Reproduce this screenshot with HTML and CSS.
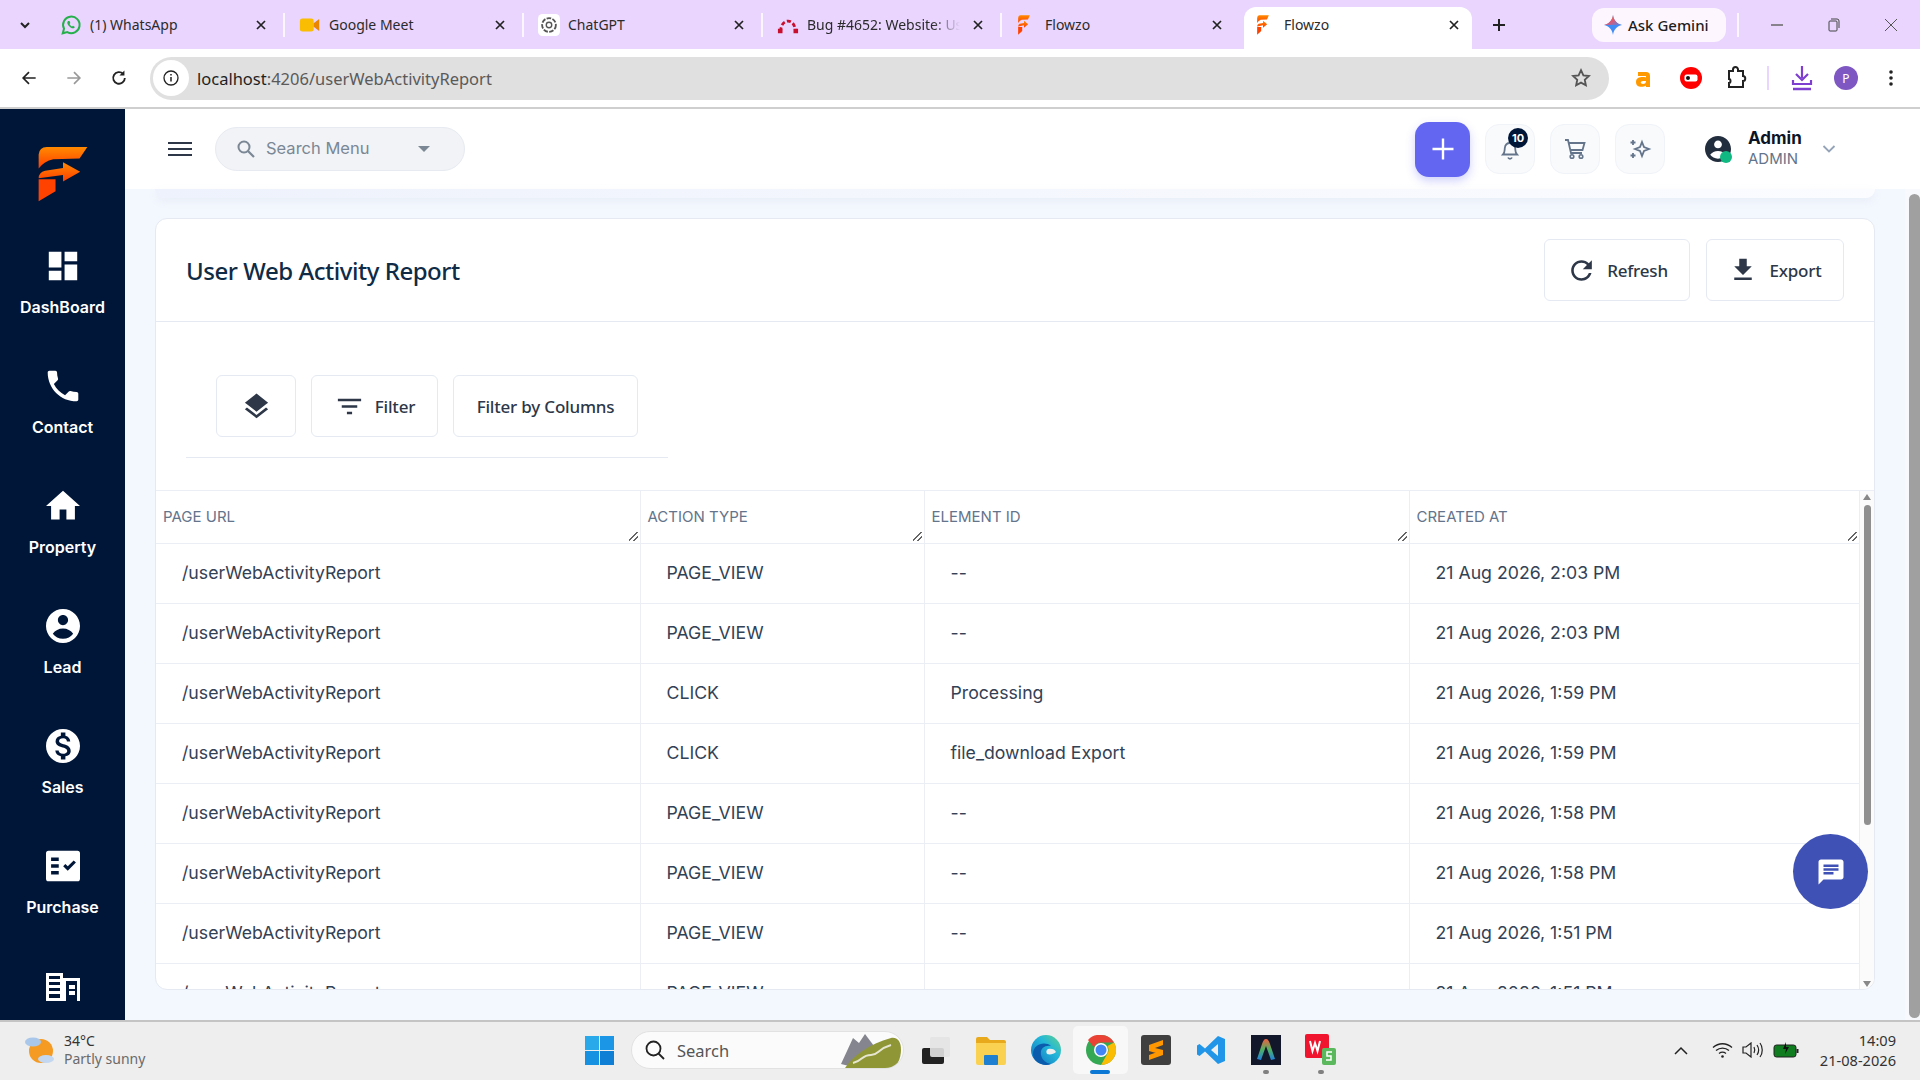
FILE: index.html
```html
<!DOCTYPE html>
<html>
<head>
  <title>Flowzo</title>
  <link rel="stylesheet" href="styles.css">
</head>
<body>
  <svg class="sprite" width="0" height="0">
    <defs>
      <linearGradient id="flameTop" x1="0" y1="0" x2="0" y2="1">
        <stop offset="0" stop-color="#ff8a00"/>
        <stop offset="1" stop-color="#ff3d00"/>
      </linearGradient>
      <symbol id="flowzo" viewBox="118 112 154 170" preserveAspectRatio="none">
        <path fill="url(#flameTop)" d="M120 138q2-23 25-23h125l-24 35-81 2q-28 6-45 28z"/>
        <path fill="url(#flameTop)" d="M120 210q0-18 20-23l55-8v-18l53 29-53 30v-20z"/>
        <path fill="#ff4200" d="M120 213h52v36l-52 31z"/>
      </symbol>
      <symbol id="close-x" viewBox="0 0 12 12">
        <path d="M2 2l8 8M10 2l-8 8" fill="none" stroke="#222" stroke-width="1.7"/>
      </symbol>
    </defs>
  </svg>

  <!-- browser tabs -->
  <div class="tabstrip">
    <div class="tab-menu">
      <svg width="14" height="14" viewBox="0 0 14 14"><path d="M3 5l4 4 4-4" fill="none" stroke="#222" stroke-width="2"/></svg>
    </div>
    <div class="tab">
      <svg class="tab-icon" viewBox="0 0 24 24"><path fill="none" stroke="#25b04c" stroke-width="2.2" d="M3 21l1.4-5A9 9 0 1 1 8 19.7z"/><path fill="#25b04c" d="M9 7.5c-1 .6-1.400 2-.6 3.800 1 2 2.600 3.500 4.600 4.200 1.600.5 2.800-.2 3.200-1.300l-2-1.400-1 .9c-1.200-.5-2.200-1.500-2.800-2.800l.9-1-1-2.400z"/></svg>
      <span class="tab-title">(1) WhatsApp</span>
      <svg class="tab-close"><use href="#close-x"/></svg>
    </div>
    <span class="tab-sep"></span>
    <div class="tab">
      <svg class="tab-icon" viewBox="0 0 24 24"><rect x="1" y="5" width="15" height="14" rx="2.500" fill="#fbbc04"/><path fill="#ea8600" d="M16 10l6-4.500v13L16 14z"/></svg>
      <span class="tab-title">Google Meet</span>
      <svg class="tab-close"><use href="#close-x"/></svg>
    </div>
    <span class="tab-sep"></span>
    <div class="tab">
      <svg class="tab-icon" viewBox="0 0 24 24"><rect width="24" height="24" rx="5" fill="#fff"/><circle cx="12" cy="12" r="7.500" fill="none" stroke="#555" stroke-width="2" stroke-dasharray="5 1.500"/><circle cx="12" cy="12" r="3" fill="none" stroke="#555" stroke-width="1.500"/></svg>
      <span class="tab-title">ChatGPT</span>
      <svg class="tab-close"><use href="#close-x"/></svg>
    </div>
    <span class="tab-sep"></span>
    <div class="tab">
      <svg class="tab-icon" viewBox="0 0 24 24"><path fill="none" stroke="#c8102e" stroke-width="3" stroke-dasharray="4.500 2.500" d="M4 19C4 4 20 4 20 19"/><path fill="#c8102e" d="M1 16h5v5H1zM18 16h5v5h-5z"/></svg>
      <span class="tab-title tab-title-fade">Bug #4652: Website: User Web</span>
      <svg class="tab-close"><use href="#close-x"/></svg>
    </div>
    <span class="tab-sep"></span>
    <div class="tab">
      <svg class="tab-icon tab-icon-flowzo"><use href="#flowzo"/></svg>
      <span class="tab-title">Flowzo</span>
      <svg class="tab-close"><use href="#close-x"/></svg>
    </div>
    <div class="tab tab-active">
      <svg class="tab-icon tab-icon-flowzo"><use href="#flowzo"/></svg>
      <span class="tab-title">Flowzo</span>
      <svg class="tab-close"><use href="#close-x"/></svg>
    </div>
    <div class="tab-new">
      <svg width="16" height="16" viewBox="0 0 16 16"><path d="M8 2v12M2 8h12" stroke="#222" stroke-width="2"/></svg>
    </div>
    <div class="gemini">
      <svg width="20" height="22" viewBox="0 0 20 22"><defs><linearGradient id="gem" x1="0" y1="0" x2="1" y2="1"><stop offset="0" stop-color="#f4a63a"/><stop offset=".5" stop-color="#e8556a"/><stop offset="1" stop-color="#3f8cf5"/></linearGradient></defs><path fill="#3f8cf5" d="M10 1c.8 5.300 3.800 9 9 10-5.200 1-8.200 4.700-9 10-.8-5.300-3.800-9-9-10 5.200-1 8.200-4.700 9-10z"/><path fill="url(#gem)" d="M10 1c.8 5.300 3.800 9 9 10H1c5.200-1 8.200-4.700 9-10z"/></svg>
      <span>Ask Gemini</span>
    </div>
    <span class="tab-sep tab-sep-win"></span>
    <div class="win-controls">
      <svg width="16" height="16" viewBox="0 0 16 16"><path d="M2 8h12" stroke="#666" stroke-width="1.500"/></svg>
      <svg width="16" height="16" viewBox="0 0 16 16"><rect x="3" y="4" width="8" height="10" rx="1" fill="none" stroke="#444"/><path d="M5 2h6a2 2 0 0 1 2 2v7" fill="none" stroke="#444"/></svg>
      <svg width="16" height="16" viewBox="0 0 16 16"><path d="M2 2l12 12M14 2L2 14" stroke="#555"/></svg>
    </div>
  </div>

  <!-- address bar -->
  <div class="toolbar">
    <div class="nav-buttons">
      <svg width="20" height="20" viewBox="0 0 24 24"><path d="M20 12H5M12 5l-7 7 7 7" fill="none" stroke="#222" stroke-width="2"/></svg>
      <svg width="20" height="20" viewBox="0 0 24 24"><path d="M4 12h15M12 5l7 7-7 7" fill="none" stroke="#999" stroke-width="2"/></svg>
      <svg width="20" height="20" viewBox="0 0 24 24"><path d="M19 12a7 7 0 1 1-2-5" fill="none" stroke="#222" stroke-width="2.200"/><path d="M18.500 3v6h-6z" fill="#222"/></svg>
    </div>
    <div class="omnibox">
      <span class="omni-info">
        <svg width="16" height="16" viewBox="0 0 16 16"><circle cx="8" cy="8" r="7" fill="none" stroke="#222" stroke-width="1.300"/><path d="M8 7v4.500M8 4v1.600" stroke="#222" stroke-width="1.500"/></svg>
      </span>
      <span class="omni-url"><b>localhost</b>:4206/userWebActivityReport</span>
      <svg class="omni-star" width="22" height="22" viewBox="0 0 24 24"><path d="M12 3.500l2.600 5.600 6 .7-4.500 4.100 1.200 6L12 17l-5.300 2.900 1.200-6-4.500-4.100 6-.7z" fill="none" stroke="#555" stroke-width="2"/></svg>
    </div>
    <div class="extensions">
      <svg class="ext" width="18" height="22" viewBox="0 0 18 22"><path d="M3 5h8a4 4 0 0 1 4 4v11h-4v-1.500C9 20 1 21.500 1 15c0-5 6-5.500 10-4.500V9H3zm8 9H8c-3 0-3 3 0 3 2 0 3-1 3-3z" fill="#ff9900"/></svg>
      <svg class="ext" width="24" height="24" viewBox="0 0 24 24"><circle cx="12" cy="12" r="11" fill="#f00"/><rect x="5.500" y="8.500" width="13" height="7" rx="2" fill="#fff"/><circle cx="9" cy="12" r="2" fill="#111"/></svg>
      <svg class="ext" width="22" height="24" viewBox="0 0 22 24"><path d="M4 5h4V3.500a2.500 2.500 0 0 1 5 0V5h5v5c3 0 3 5 0 5v6H4v-4c2 0 2-4 0-4z" fill="none" stroke="#222" stroke-width="2"/></svg>
      <span class="ext-sep"></span>
      <svg class="ext" width="24" height="28" viewBox="0 0 24 28"><path d="M12 2v12M6 10l6 6 6-6M3 16v4h18v-4" fill="none" stroke="#7e3fd1" stroke-width="2.200"/><path d="M3 25h18" stroke="#7e3fd1" stroke-width="2.500"/></svg>
      <span class="profile">P</span>
      <svg class="ext" width="6" height="20" viewBox="0 0 6 20"><circle cx="3" cy="4" r="1.800" fill="#222"/><circle cx="3" cy="10" r="1.800" fill="#222"/><circle cx="3" cy="16" r="1.800" fill="#222"/></svg>
    </div>
  </div>

  <div class="app">
    <!-- sidebar -->
    <nav class="sidebar">
      <svg class="logo"><use href="#flowzo"/></svg>
      <a class="nav-item">
        <svg viewBox="2.500 2.500 19 19" width="30" height="30"><path fill="#fff" d="M3 13h8V3H3zm0 8h8v-6H3zm10 0h8V11h-8zm0-18v6h8V3z"/></svg>
        <span>DashBoard</span>
      </a>
      <a class="nav-item">
        <svg viewBox="2 2 20 20" width="34" height="34"><path fill="#fff" d="M6.620 10.790c1.440 2.830 3.760 5.140 6.590 6.590l2.200-2.200c.27-.27.67-.36 1.020-.24 1.120.37 2.330.57 3.570.57.55 0 1 .45 1 1V20c0 .55-.45 1-1 1-9.390 0-17-7.610-17-17 0-.55.45-1 1-1h3.500c.55 0 1 .45 1 1 0 1.250.2 2.450.57 3.570.11.35.03.74-.25 1.020z"/></svg>
        <span>Contact</span>
      </a>
      <a class="nav-item">
        <svg viewBox="2 2 20 20" width="34" height="34"><path fill="#fff" d="M10 20v-6h4v6h5v-8h3L12 3 2 12h3v8z"/></svg>
        <span>Property</span>
      </a>
      <a class="nav-item">
        <svg viewBox="2 2 20 20" width="34" height="34"><path fill="#fff" d="M12 2C6.480 2 2 6.480 2 12s4.480 10 10 10 10-4.480 10-10S17.520 2 12 2zm0 3.500c1.660 0 3 1.340 3 3s-1.340 3-3 3-3-1.340-3-3 1.340-3 3-3zm0 14c-2.500 0-4.700-1.200-6-3 1.300-1.800 3.500-3 6-3s4.700 1.200 6 3c-1.300 1.800-3.500 3-6 3z"/></svg>
        <span>Lead</span>
      </a>
      <a class="nav-item">
        <svg viewBox="2 2 20 20" width="34" height="34"><path fill="#fff" d="M12 2C6.480 2 2 6.480 2 12s4.480 10 10 10 10-4.480 10-10S17.520 2 12 2zm1.410 16.090V20h-2.670v-1.930c-1.710-.36-3.160-1.460-3.270-3.400h1.960c.1 1.050.82 1.870 2.650 1.870 1.960 0 2.400-.98 2.400-1.590 0-.83-.44-1.610-2.670-2.140-2.480-.6-4.180-1.620-4.180-3.670 0-1.720 1.390-2.840 3.110-3.210V4h2.670v1.950c1.860.45 2.790 1.860 2.850 3.390H14.300c-.05-1.110-.64-1.870-2.220-1.870-1.500 0-2.400.68-2.400 1.640 0 .84.65 1.390 2.670 1.910s4.180 1.390 4.180 3.910c-.01 1.830-1.380 2.830-3.120 3.160z"/></svg>
        <span>Sales</span>
      </a>
      <a class="nav-item">
        <svg viewBox="2 3 20 18" width="34" height="30"><path fill="#fff" fill-rule="evenodd" d="M3.500 3h17A1.500 1.500 0 0 1 22 4.500v15a1.500 1.500 0 0 1-1.500 1.500h-17A1.500 1.500 0 0 1 2 19.500v-15A1.500 1.500 0 0 1 3.500 3zM5 7v2h4.500V7zm0 4v2h4.500v-2zm0 4v2h4.500v-2zm9.800-.2L19.600 10l-1.300-1.300-3.500 3.500-1.400-1.400-1.300 1.300z"/></svg>
        <span>Purchase</span>
      </a>
      <a class="nav-item">
        <svg viewBox="0 0 34 30" width="34" height="30"><path fill="#fff" fill-rule="evenodd" d="M0 2h17v5h17v23H0zm3 3v3h11V5zm0 6v3h11v-3zm0 6v3h11v-3zm0 6v4h11v-4zm17-13v20h11V10zm3 4h6v4h-6zm0 6h6v4h-6z"/></svg>
      </a>
    </nav>

    <div class="main">
      <header class="topbar">
        <button class="menu-btn">
          <svg width="24" height="16" viewBox="0 0 24 16"><path d="M0 2h24M0 8h24M0 14h24" stroke="#2d3748" stroke-width="2.200"/></svg>
        </button>
        <div class="search-menu">
          <svg width="20" height="20" viewBox="0 0 20 20"><circle cx="8" cy="8" r="5.500" fill="none" stroke="#7b8794" stroke-width="2"/><path d="M12 12l6 6" stroke="#7b8794" stroke-width="2.200"/></svg>
          <span class="search-text">Search Menu</span>
          <span class="caret"></span>
        </div>
        <div class="topbar-right">
          <button class="add-btn">
            <svg width="24" height="24" viewBox="0 0 24 24"><path d="M12 1.500v21M1.500 12h21" stroke="#fff" stroke-width="2.400"/></svg>
          </button>
          <button class="icon-btn">
            <svg width="24" height="24" viewBox="0 0 24 24"><path d="M5 17.500c2-2 1.500-4 1.800-6.500C7.200 8 9 6 12 6s4.800 2 5.200 5c.3 2.500-.2 4.500 1.800 6.500zM10 20.500a2.200 2.200 0 0 0 4 0" fill="none" stroke="#64748b" stroke-width="1.800"/></svg>
            <span class="badge">10</span>
          </button>
          <button class="icon-btn">
            <svg width="24" height="24" viewBox="0 0 24 24"><path d="M2 3h3l3 13h11M6 6h15.500l-2 7H7.500" fill="none" stroke="#64748b" stroke-width="1.800"/><circle cx="9" cy="19.500" r="1.800" fill="none" stroke="#64748b" stroke-width="1.600"/><circle cx="18" cy="19.500" r="1.800" fill="none" stroke="#64748b" stroke-width="1.600"/></svg>
          </button>
          <button class="icon-btn">
            <svg width="24" height="24" viewBox="0 0 24 24"><path d="M14 5l2 5 5 2-5 2-2 5-2-5-5-2 5-2z" fill="none" stroke="#64748b" stroke-width="1.800"/><path d="M5 3v5M2.500 5.500h5M5 16v5M2.500 18.500h5" stroke="#64748b" stroke-width="1.800"/></svg>
          </button>
          <div class="user">
            <span class="user-pic">
              <svg width="26" height="26" viewBox="2 2 20 20"><path fill="#222d3d" d="M12 2C6.480 2 2 6.480 2 12s4.480 10 10 10 10-4.480 10-10S17.520 2 12 2zm0 3.500c1.660 0 3 1.340 3 3s-1.340 3-3 3-3-1.340-3-3 1.340-3 3-3zm0 14c-2.500 0-4.700-1.200-6-3 1.300-1.800 3.500-3 6-3s4.700 1.200 6 3c-1.300 1.800-3.500 3-6 3z"/></svg>
              <span class="online"></span>
            </span>
            <div class="user-text">
              <strong>Admin</strong>
              <small>ADMIN</small>
            </div>
            <svg class="user-chevron" width="14" height="10" viewBox="0 0 14 10"><path d="M1.500 2l5.500 5.500L12.500 2" fill="none" stroke="#94a3b8" stroke-width="1.800"/></svg>
          </div>
        </div>
      </header>

      <div class="body-row">
        <div class="content">
          <div class="top-strip"></div>

          <section class="card">
            <div class="card-head">
              <h1>User Web Activity Report</h1>
              <div class="card-actions">
                <button class="btn btn-refresh">
                  <svg width="31" height="31" viewBox="0 0 24 24"><path fill="#2d3748" d="M17.650 6.350C16.200 4.900 14.210 4 12 4c-4.420 0-7.990 3.580-7.990 8s3.570 8 7.990 8c3.730 0 6.840-2.550 7.730-6h-2.080c-.82 2.330-3.040 4-5.650 4-3.310 0-6-2.690-6-6s2.690-6 6-6c1.660 0 3.140.69 4.220 1.780L13 11h7V4z"/></svg>
                  Refresh
                </button>
                <button class="btn btn-export">
                  <svg width="30" height="30" viewBox="0 0 24 24"><path fill="#2d3748" d="M19 9h-4V3H9v6H5l7 7zM5 18v2h14v-2z"/></svg>
                  Export
                </button>
              </div>
            </div>

            <div class="filters">
              <button class="btn btn-layers">
                <svg width="31" height="31" viewBox="0 0 24 24"><path fill="#2d3748" d="M11.990 18.540l-7.370-5.730L3 14.070l9 7 9-7-1.630-1.270zM12 16l7.360-5.730L21 9l-9-7-9 7 1.630 1.270z"/></svg>
              </button>
              <button class="btn btn-filter">
                <svg width="31" height="31" viewBox="0 0 24 24"><path fill="#2d3748" d="M10 18h4v-2h-4zM3 6v2h18V6zm3 7h12v-2H6z"/></svg>
                Filter
              </button>
              <button class="btn btn-columns">Filter by Columns</button>
            </div>

            <div class="table-wrap">
              <div class="table-clip">
                <table class="report">
                  <colgroup>
                    <col class="col-url"><col class="col-action"><col class="col-element"><col class="col-created">
                  </colgroup>
                  <thead>
                    <tr>
                      <th>Page URL</th>
                      <th>Action Type</th>
                      <th>Element ID</th>
                      <th>Created At</th>
                    </tr>
                  </thead>
                  <tbody>
                    <tr><td>/userWebActivityReport</td><td>PAGE_VIEW</td><td>--</td><td>21 Aug 2026, 2:03 PM</td></tr>
                    <tr><td>/userWebActivityReport</td><td>PAGE_VIEW</td><td>--</td><td>21 Aug 2026, 2:03 PM</td></tr>
                    <tr><td>/userWebActivityReport</td><td>CLICK</td><td>Processing</td><td>21 Aug 2026, 1:59 PM</td></tr>
                    <tr><td>/userWebActivityReport</td><td>CLICK</td><td>file_download Export</td><td>21 Aug 2026, 1:59 PM</td></tr>
                    <tr><td>/userWebActivityReport</td><td>PAGE_VIEW</td><td>--</td><td>21 Aug 2026, 1:58 PM</td></tr>
                    <tr><td>/userWebActivityReport</td><td>PAGE_VIEW</td><td>--</td><td>21 Aug 2026, 1:58 PM</td></tr>
                    <tr><td>/userWebActivityReport</td><td>PAGE_VIEW</td><td>--</td><td>21 Aug 2026, 1:51 PM</td></tr>
                    <tr><td>/userWebActivityReport</td><td>PAGE_VIEW</td><td>--</td><td>21 Aug 2026, 1:51 PM</td></tr>
                  </tbody>
                </table>
              </div>
              <div class="table-scroll">
                <span class="arrow-up"></span>
                <span class="table-thumb"></span>
                <span class="arrow-down"></span>
              </div>
            </div>
          </section>
        </div>
        <div class="page-scroll"><span class="page-thumb"></span></div>
      </div>

      <button class="chat-fab">
        <svg width="30" height="30" viewBox="0 0 24 24"><path fill="#fff" d="M20 2H4c-1.100 0-1.990.9-1.990 2L2 22l4-4h14c1.100 0 2-.9 2-2V4c0-1.100-.9-2-2-2zM6 9h12v2H6zm8 5H6v-2h8zm4-6H6V6h12z"/></svg>
      </button>
    </div>
  </div>

  <!-- windows taskbar -->
  <footer class="taskbar">
    <div class="weather">
      <svg width="32" height="32" viewBox="0 0 32 32"><circle cx="17" cy="17" r="12" fill="#f59a23"/><ellipse cx="9" cy="8" rx="8" ry="4.500" fill="#a9c7ea"/><ellipse cx="22" cy="25" rx="8" ry="4" fill="#c3d8f0"/></svg>
      <div class="weather-text">
        <span>34°C</span>
        <span class="weather-sub">Partly sunny</span>
      </div>
    </div>
    <div class="task-center">
      <svg class="start" width="29" height="29" viewBox="0 0 29 29"><path fill="#29a8ea" d="M0 0h14v14H0z"/><path fill="#1b96e6" d="M15 0h14v14H15z"/><path fill="#1690e0" d="M0 15h14v14H0z"/><path fill="#0f7fd6" d="M15 15h14v14H15z"/></svg>
      <div class="task-search">
        <svg width="22" height="22" viewBox="0 0 22 22"><circle cx="9.500" cy="9.500" r="7" fill="none" stroke="#222" stroke-width="1.800"/><path d="M14.500 14.500l5.500 5.500" stroke="#222" stroke-width="1.800"/></svg>
        <span>Search</span>
        <svg class="search-art" width="64" height="36" viewBox="0 0 64 36"><path fill="#85858f" d="M2 32L14 6l6 5 6-9 12 16-20 18z"/><path fill="#8f9636" d="M6 36c8-12 24-24 46-30 6-1 10 3 10 12 0 8-4 18-10 18z"/><path d="M14 31c10-2 8-8 18-8 8 0 6-6 20-10" fill="none" stroke="#e6e6d0" stroke-width="2"/></svg>
      </div>
      <div class="task-app">
        <svg width="30" height="30" viewBox="0 0 30 30"><rect x="1" y="13" width="22" height="16" rx="2" fill="#222"/><rect x="9" y="2" width="20" height="20" rx="2" fill="#e3e3e3" opacity=".9"/></svg>
      </div>
      <div class="task-app">
        <svg width="30" height="30" viewBox="0 0 30 30"><path fill="#e8a91c" d="M0 4a2 2 0 0 1 2-2h9l3 3h14a2 2 0 0 1 2 2v5H0z"/><path fill="#fad150" d="M0 8h30v20a2 2 0 0 1-2 2H2a2 2 0 0 1-2-2z"/><rect x="8" y="20" width="14" height="10" rx="1" fill="#1f7fd1"/></svg>
      </div>
      <div class="task-app">
        <svg width="30" height="32" viewBox="0 0 30 32"><defs><linearGradient id="edgeTop" x1="0" y1="1" x2="1" y2="0"><stop offset="0" stop-color="#0f6cbd"/><stop offset=".6" stop-color="#23b7d9"/><stop offset="1" stop-color="#5fd38a"/></linearGradient></defs><circle cx="15" cy="16" r="15" fill="url(#edgeTop)"/><path fill="#0b5cad" d="M2 20C2 10 14 7 20 12c-7-1-11 3-10 9 1 5 5 8 10 9-8 3-18-2-18-10z"/><path fill="#eeeeee" d="M17 15c3-1 7 0 8 3-2 2-6 3-9 2-1-2-1-4 1-5z"/></svg>
      </div>
      <div class="task-app task-app-active">
        <svg width="30" height="30" viewBox="0 0 30 30"><circle cx="15" cy="15" r="15" fill="#34a853"/><path fill="#ea4335" d="M15 0a15 15 0 0 1 13 7.500H15a7.500 7.500 0 0 0-7 5L2 5A15 15 0 0 1 15 0z"/><path fill="#fbbc04" d="M28 7.500A15 15 0 0 1 15 30l6.500-11.500A7.500 7.500 0 0 0 21.500 11z"/><circle cx="15" cy="15" r="7" fill="#fff"/><circle cx="15" cy="15" r="5.500" fill="#4285f4"/></svg>
        <span class="task-line"></span>
      </div>
      <div class="task-app">
        <svg width="30" height="30" viewBox="0 0 30 30"><rect width="30" height="30" rx="3" fill="#3f3f3f"/><path fill="#ff9800" d="M22 5L8 10v6l14 4v-5L14 13l8-3zM8 25l14-5v-5L8 20z"/></svg>
      </div>
      <div class="task-app">
        <svg width="30" height="30" viewBox="0 0 30 30"><path fill="#2196e8" d="M22 1l7 3v22l-7 3L9 16.500 3.500 21 1 19.500V10.500L3.500 9 9 13.500zm0 8l-7 6 7 6z"/></svg>
      </div>
      <div class="task-app">
        <svg width="30" height="30" viewBox="0 0 30 30"><defs><linearGradient id="arc" x1="0" y1="0" x2="0" y2="1"><stop offset="0" stop-color="#f06040"/><stop offset=".5" stop-color="#50b060"/><stop offset="1" stop-color="#2080e0"/></linearGradient></defs><rect width="30" height="30" fill="#12172a"/><path fill="url(#arc)" d="M15 4c2 0 3 2 4 5l5 15-4 1-5-14-5 14-4-1 5-15c1-3 2-5 4-5z"/></svg>
        <span class="task-dot"></span>
      </div>
      <div class="task-app">
        <svg width="32" height="32" viewBox="0 0 32 32"><rect width="24" height="24" rx="2" fill="#f0142f"/><path d="M5 7l2.500 10L10 9l2.500 8L15 7" fill="none" stroke="#fff" stroke-width="2"/><rect x="17" y="14" width="14" height="17" rx="2" fill="#5cb85c"/><path d="M27 18h-5v4h4v4h-5" fill="none" stroke="#fff" stroke-width="1.500"/></svg>
        <span class="task-dot"></span>
      </div>
    </div>
    <div class="tray">
      <svg class="tray-chevron" width="14" height="9" viewBox="0 0 14 9"><path d="M1 8l6-6 6 6" fill="none" stroke="#222" stroke-width="1.500"/></svg>
      <svg class="tray-wifi" width="21" height="16" viewBox="0 0 21 16"><path d="M1 5.500c5.500-5 13.500-5 19 0M4 8.500c3.800-3.300 9.200-3.300 13 0M7 11.500c2-1.500 5-1.500 7 0" fill="none" stroke="#222" stroke-width="1.300"/><circle cx="10.500" cy="14.500" r="1.300" fill="#222"/></svg>
      <svg class="tray-sound" width="21" height="16" viewBox="0 0 21 16"><path d="M1 5h3l5-4v14l-5-4H1z" fill="none" stroke="#222" stroke-width="1.200"/><path d="M12 5c1 2 1 4 0 6M15 3c2 3 2 7 0 10M18 1c3 4 3 10 0 14" fill="none" stroke="#222" stroke-width="1.200"/></svg>
      <svg class="tray-battery" width="26" height="16" viewBox="0 0 26 16"><rect x="1" y="3" width="22" height="12" rx="2.500" fill="#0f7d1f" stroke="#222"/><rect x="23.500" y="7" width="2" height="4" fill="#222"/><path d="M13 0l-3 7h3l-1 5 4-7h-3z" fill="#111"/></svg>
      <div class="clock">
        <span>14:09</span>
        <span>21-08-2026</span>
      </div>
    </div>
  </footer>
</body>
</html>
```

FILE: styles.css
```css
/* Reset and base styles */
* {
  margin: 0;
  padding: 0;
  box-sizing: border-box;
}

html, body {
  width: 1920px;
  height: 1080px;
  overflow: hidden;
}

body {
  display: flex;
  flex-direction: column;
  font-family: "Noto Sans", "Open Sans", sans-serif;
  background-color: #ffffff;
  color: #222222;
}

button {
  font-family: inherit;
  background: none;
  border: none;
}

.sprite {
  position: absolute;
}

/* Browser tabs */
.tabstrip {
  display: flex;
  align-items: center;
  flex: 0 0 49px;
  background-color: #e9d5fe;
  font-size: 14px;
}

.tab-menu {
  display: flex;
  justify-content: center;
  width: 50px;
  margin-right: -4px;
  flex: none;
}

.tab {
  display: flex;
  align-items: center;
  width: 237px;
  height: 42px;
  margin-top: 7px;
  padding: 0 16px 7px 14px;
  flex: none;
}

.tab-active {
  width: 228px;
  margin-left: 5px;
  padding-left: 11px;
  padding-right: 12px;
  background-color: #ffffff;
  border-radius: 12px 12px 0 0;
}

.tab-icon {
  width: 22px;
  height: 22px;
  flex: none;
}

.tab-icon-flowzo {
  width: 12px;
  height: 20px;
  margin: 0 7px 0 2px;
}

.tab-title {
  flex: 1;
  margin-left: 8px;
  overflow: hidden;
  white-space: nowrap;
  color: #2b2b2b;
}

.tab-title-fade {
  -webkit-mask-image: linear-gradient(to right, #000 82%, transparent);
  mask-image: linear-gradient(to right, #000 82%, transparent);
}

.tab-close {
  width: 12px;
  height: 12px;
  margin-left: 12px;
  flex: none;
}

.tab-sep {
  width: 2px;
  height: 24px;
  background-color: #fbf6ff;
  flex: none;
}

.tab-new {
  display: flex;
  align-items: center;
  justify-content: center;
  width: 28px;
  margin-left: 13px;
}

.gemini {
  display: flex;
  align-items: center;
  gap: 5px;
  width: 134px;
  height: 34px;
  margin-left: 79px;
  padding-left: 11px;
  border-radius: 12px;
  background-color: #fdf6ff;
  font-size: 15px;
  font-weight: 500;
  color: #1f1f1f;
}

.tab-sep-win {
  margin-left: 11px;
}

.win-controls {
  display: flex;
  align-items: center;
  gap: 41px;
  margin-left: 30px;
}

/* Address bar */
.toolbar {
  display: flex;
  align-items: center;
  flex: 0 0 60px;
  background-color: #ffffff;
  border-bottom: 2px solid #cfcfcf;
  border-radius: 8px 8px 0 0;
}

.nav-buttons {
  display: flex;
  gap: 25px;
  margin-left: 19px;
}

.omnibox {
  display: flex;
  align-items: center;
  width: 1459px;
  height: 43px;
  margin-left: 21px;
  padding: 0 17px 0 3px;
  border-radius: 22px;
  background-color: #e0e0e0;
}

.omni-info {
  display: flex;
  align-items: center;
  justify-content: center;
  width: 36px;
  height: 36px;
  border-radius: 50%;
  background-color: #ffffff;
}

.omni-url {
  flex: 1;
  margin-left: 8px;
  font-size: 16.5px;
  color: #5a5a5a;
}

.omni-url b {
  font-weight: 400;
  color: #1f1f1f;
}

.extensions {
  display: flex;
  align-items: center;
  gap: 0;
  margin-left: 26px;
}

.ext:nth-child(2) {
  margin-left: 26px;
}

.ext:nth-child(3) {
  margin-left: 22px;
}

.ext-sep {
  width: 2px;
  height: 24px;
  margin-left: 20px;
  background-color: #e9d5fe;
}

.extensions .ext:nth-child(5) {
  margin-left: 21px;
}

.profile {
  display: flex;
  align-items: center;
  justify-content: center;
  width: 24px;
  height: 24px;
  margin-left: 20px;
  border-radius: 50%;
  background-color: #7e57c2;
  color: #ffffff;
  font-size: 12px;
}

.extensions .ext:last-child {
  margin-left: 30px;
}

/* App shell */
.app {
  display: flex;
  flex: 1;
  min-height: 0;
}

.sidebar {
  display: flex;
  flex-direction: column;
  align-items: center;
  width: 125px;
  flex: none;
  overflow: hidden;
  background-color: #001639;
  font-family: Inter, sans-serif;
}

.logo {
  width: 50px;
  height: 56px;
  margin-top: 37px;
  margin-bottom: 30px;
  flex: none;
}

.nav-item {
  display: flex;
  flex-direction: column;
  align-items: center;
  justify-content: flex-start;
  flex: 0 0 120px;
  width: 100%;
  padding-top: 17px;
  color: #ffffff;
  font-size: 16px;
  font-weight: 600;
}

.nav-item svg {
  height: 34px;
  flex: none;
}

.nav-item span {
  margin-top: 14px;
  line-height: 20px;
}

.main {
  position: relative;
  display: flex;
  flex-direction: column;
  flex: 1;
  min-width: 0;
  background-color: #f3f7fe;
}

/* Top bar */
.topbar {
  display: flex;
  align-items: center;
  flex: 0 0 80px;
  padding: 0 15px 0 43px;
  background-color: #ffffff;
  font-family: Inter, sans-serif;
}

.menu-btn {
  display: flex;
  width: 24px;
}

.search-menu {
  display: flex;
  align-items: center;
  width: 250px;
  height: 44px;
  margin-left: 23px;
  padding: 0 34px 0 20px;
  border: 1px solid #e7eaf0;
  border-radius: 22px;
  background-color: #f1f3f7;
}

.search-text {
  flex: 1;
  margin-left: 10px;
  margin-bottom: 3px;
  font-size: 16.5px;
  color: #7b8794;
}

.caret {
  width: 0;
  height: 0;
  border-left: 6px solid transparent;
  border-right: 6px solid transparent;
  border-top: 6px solid #7b8794;
}

.topbar-right {
  display: flex;
  align-items: center;
  margin-left: auto;
}

.add-btn {
  display: flex;
  align-items: center;
  justify-content: center;
  width: 55px;
  height: 55px;
  border-radius: 14px;
  background-color: #6366f1;
  box-shadow: 0 4px 10px rgba(99, 102, 241, 0.3);
}

.icon-btn {
  position: relative;
  display: flex;
  align-items: center;
  justify-content: center;
  width: 50px;
  height: 50px;
  margin-left: 15px;
  border: 1px solid #f0f3f8;
  border-radius: 14px;
  background-color: #f8fafc;
}

.badge {
  position: absolute;
  top: 3px;
  right: 6px;
  display: flex;
  align-items: center;
  justify-content: center;
  width: 20px;
  height: 20px;
  border-radius: 50%;
  background-color: #001639;
  color: #ffffff;
  font-size: 11px;
  font-weight: 700;
}

.user {
  display: flex;
  align-items: center;
  margin-left: 40px;
  margin-right: 69px;
}

.user-pic {
  position: relative;
  display: flex;
  width: 26px;
  height: 26px;
}

.online {
  position: absolute;
  right: -1px;
  bottom: -1px;
  width: 12px;
  height: 12px;
  border-radius: 50%;
  background-color: #10b981;
}

.user-text {
  display: flex;
  flex-direction: column;
  margin-left: 17px;
  margin-bottom: 2px;
  width: 74px;
}

.user-text strong {
  font-size: 17px;
  font-weight: 700;
  line-height: 21px;
  color: #0b1526;
}

.user-text small {
  font-size: 15px;
  line-height: 19px;
  color: #64748b;
}

/* Page body */
.body-row {
  display: flex;
  flex: 1;
  min-height: 0;
}

.content {
  display: flex;
  flex-direction: column;
  flex: 1;
  min-width: 0;
  padding: 0 30px 30px;
}

.top-strip {
  flex: 0 0 9px;
  margin-bottom: 20px;
  border-radius: 0 0 14px 14px;
  background: linear-gradient(to right, #eef2fc, #fbfcff);
  box-shadow: 0 3px 8px rgba(148, 163, 184, 0.1);
}

.card {
  display: flex;
  flex-direction: column;
  flex: 1;
  min-height: 0;
  overflow: hidden;
  border: 1px solid #e4e9f2;
  border-radius: 12px;
  background-color: #ffffff;
}

.card-head {
  display: flex;
  align-items: center;
  justify-content: space-between;
  flex: 0 0 103px;
  padding: 0 30px;
  border-bottom: 1px solid #e4e9f2;
}

.card-head h1 {
  font-size: 24px;
  font-weight: 500;
  letter-spacing: -0.46px;
  color: #0f2b46;
}

.card-actions {
  display: flex;
  gap: 16px;
}

.btn {
  display: flex;
  align-items: center;
  justify-content: center;
  height: 62px;
  border: 1px solid #e4e9f2;
  border-radius: 6px;
  background-color: #ffffff;
  color: #2d3748;
  font-size: 17px;
  font-weight: 500;
  letter-spacing: -0.2px;
}

.btn-refresh {
  width: 146px;
  gap: 10px;
}

.btn-export {
  width: 138px;
  gap: 11px;
}

.btn-layers {
  width: 80px;
}

.btn-filter {
  width: 127px;
  gap: 10px;
}

.btn-columns {
  width: 185px;
}

.filters {
  display: flex;
  gap: 15px;
  flex: none;
  width: 482px;
  margin: 53px 0 32px 30px;
  padding: 0 0 20px 30px;
  border-bottom: 1px solid #e4e9f2;
  white-space: nowrap;
}

/* Table */
.table-wrap {
  display: flex;
  flex: 1;
  min-height: 0;
  border-top: 1px solid #ebeef5;
}

.table-clip {
  flex: 1;
  min-width: 0;
  overflow: hidden;
}

.report {
  width: 100%;
  border-collapse: collapse;
  table-layout: fixed;
  font-family: Inter, sans-serif;
}

.col-url { width: 484px; }
.col-action { width: 284px; }
.col-element { width: 485px; }

.report th {
  position: relative;
  height: 52px;
  padding: 0 7px 1px;
  border-right: 1px solid #ebeef5;
  border-bottom: 1px solid #ebeef5;
  text-align: left;
  text-transform: uppercase;
  font-size: 15px;
  font-weight: 400;
  color: #64748b;
}

/* column resize grip */
.report th::after {
  content: "";
  position: absolute;
  right: 2px;
  bottom: 2px;
  width: 9px;
  height: 9px;
  background: linear-gradient(135deg, transparent 42%, #666 42%, #666 54%, transparent 54%, transparent 68%, #666 68%, #666 80%, transparent 80%);
}

.report td {
  height: 60px;
  padding: 0 26px 1px;
  border-right: 1px solid #ebeef5;
  border-bottom: 1px solid #ebeef5;
  font-size: 17.7px;
  color: #334155;
  white-space: nowrap;
}

.table-scroll {
  display: flex;
  flex-direction: column;
  align-items: center;
  flex: 0 0 14px;
  padding-top: 3px;
  background-color: #fbfbfb;
}

.arrow-up, .arrow-down {
  width: 0;
  height: 0;
  border-left: 4px solid transparent;
  border-right: 4px solid transparent;
}

.arrow-up {
  border-bottom: 6px solid #888888;
}

.arrow-down {
  margin-top: auto;
  margin-bottom: 2px;
  border-top: 6px solid #888888;
}

.table-thumb {
  width: 7px;
  height: 320px;
  margin-top: 5px;
  border-radius: 4px;
  background-color: #8f8f8f;
}

.page-scroll {
  display: flex;
  justify-content: flex-end;
  flex: 0 0 15px;
  padding-top: 5px;
  padding-bottom: 2px;
  background-color: #f8f9fd;
}

.page-thumb {
  width: 11px;
  border-radius: 6px;
  background-color: #a0a0a0;
}

.chat-fab {
  position: absolute;
  top: 725px;
  left: 1668px;
  display: flex;
  align-items: center;
  justify-content: center;
  width: 75px;
  height: 75px;
  border-radius: 50%;
  background-color: #3f51b5;
}

/* Taskbar */
.taskbar {
  display: grid;
  grid-template-columns: 585px auto 1fr;
  align-items: center;
  flex: 0 0 60px;
  padding-bottom: 2px;
  background-color: #eeeeee;
  border-top: 2px solid #c4c4c4;
}

.weather {
  display: flex;
  align-items: center;
  gap: 8px;
  padding-left: 24px;
}

.weather-text {
  display: flex;
  flex-direction: column;
  font-size: 14px;
  line-height: 18px;
  color: #333333;
}

.weather-sub {
  color: #6a6a6a;
}

.task-center {
  display: flex;
  align-items: center;
}

.start {
  flex: none;
}

.task-search {
  display: flex;
  align-items: center;
  width: 273px;
  height: 38px;
  margin-left: 17px;
  margin-right: 4px;
  padding-left: 12px;
  overflow: hidden;
  border: 1px solid #e2e2e2;
  border-radius: 19px;
  background-color: #fbfbfb;
  font-size: 16.5px;
  color: #555555;
}

.task-search span {
  flex: 1;
  margin-left: 11px;
}

.search-art {
  flex: none;
}

.task-app {
  position: relative;
  display: flex;
  align-items: center;
  justify-content: center;
  width: 55px;
  height: 48px;
}

.task-app-active {
  background-color: #f8f8f8;
  border-radius: 5px;
}

.task-line {
  position: absolute;
  bottom: 0;
  left: 17px;
  width: 20px;
  height: 4px;
  border-radius: 2px;
  background-color: #0a78d4;
}

.task-dot {
  position: absolute;
  bottom: 0;
  left: 25px;
  width: 6px;
  height: 4px;
  border-radius: 2px;
  background-color: #808080;
}

.tray {
  display: flex;
  align-items: center;
  justify-content: flex-end;
  padding-right: 24px;
}

.tray-wifi {
  margin-left: 24px;
}

.tray-sound {
  margin-left: 9px;
}

.tray-battery {
  margin-left: 10px;
}

.clock {
  display: flex;
  flex-direction: column;
  align-items: flex-end;
  margin-left: 21px;
  font-size: 14.6px;
  line-height: 20px;
  color: #333333;
}
```
